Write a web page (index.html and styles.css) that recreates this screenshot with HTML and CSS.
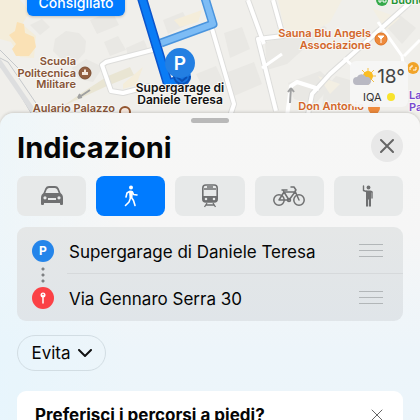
FILE: index.html
```html
<!DOCTYPE html>
<html lang="it">
<head>
<meta charset="UTF-8" />
<meta name="viewport" content="width=device-width, initial-scale=1" />
<title>Indicazioni</title>
<link rel="stylesheet" href="styles.css">
</head>
<body>

<section class="map">
  <svg class="map-canvas" viewBox="0 0 420 132" preserveAspectRatio="xMidYMin slice" role="img" aria-label="Mappa">
    <rect width="420" height="132" fill="#f0efeb" />

    <!-- blocks -->
    <g fill="#e9e8e4">
      <path d="M55 39l11-8 13 2 7 8-1 11-8 9-15-1-9-9z" />
      <path d="M30 25l12-6 8 8-10 8zM72 68l14-9 17 8-10 15-14-3zM126 48l18-8 5 12-20 8z" />
      <path d="M163 20l20-8 6 12-21 10zM224 33l18-6 8 22-20 9zM228 72l26-10 8 22-28 12zM196 74l20-8 7 15-19 9z" />
      <path d="M265 42l28-6 22-18 12 10-40 36-20 6zM288 83l32-12 14 12-20 22-20-6z" />
      <path d="M324 90l12-14 14 4v28h-28zM396 12l20 16-14 16-16-18z" />
      <path d="M90 20l22-9 7 14-22 9zM104 42l14-6 8 14-16 6z" />
    </g>
    <g fill="#f4edda">
      <path d="M0 0l20 0 10 12-8 12 14 12-2 22-14-1-9-15-11-3z" />
      <path d="M123 84l20-17-7 18-13 4zM174 20l28-10-4 12-18 5z" />
    </g>
    <g fill="#f3efe3">
      <path d="M278 0h64l-12 22-24 14-22-8zM372 8l28 10-14 12zM318 76l22 8-10 10z" />
    </g>
    <path d="M9 35l6-4 2-9 7 2 1 9 9 4 2 10-7 9-13 0-4-7 4-5z" fill="#fae1b5" />
    <path d="M83 92l25-16 22-9 4 8-27 11-26 12-18 8z" fill="#e9e5d3" />

    <!-- streets -->
    <g fill="none" stroke="#dddddb" stroke-width="6" stroke-linejoin="round">
      <path d="M160 48l-54 14-4 3 9 26 12 2 27-7" />
      <path d="M273 0l10 36-25 3 18 72M413 0L330 74l-18 20-5 26M210 22l24 82-4 12M248 0l16 44" />
    </g>
    <g fill="none" stroke="#ffffff" stroke-width="4" stroke-linejoin="round">
      <path d="M160 48l-54 14-4 3 9 26 12 2 27-7" />
      <path d="M273 0l10 36-25 3 18 72M413 0L330 74l-18 20-5 26M287 116l4-30 6-4 22 7M210 22l24 82-4 12M248 0l16 44" />
      <path d="M378 22l24 34 4 30M404 56l16-16M344 58l20 18M262 68l20-14" stroke-width="3" />
    </g>
    <path d="M0 58l8 4 34 50M0 61l31 52M0 50l20 20" fill="none" stroke="#c5c8cb" stroke-width="1" />
    <path d="M-2 60l38 55" fill="none" stroke="#dddedf" stroke-width="5" />
    <path d="M90 90L78 98m0 0l2-4m-2 4l4-1M290 103l1-15m0 0l-3 4m3-4l3 4" fill="none" stroke="#a0a1a1" stroke-width="2" />

    <!-- route -->
    <g fill="none" stroke-linejoin="round">
      <path d="M161 43l52-19-8-26" stroke="#4a94dd" stroke-width="9" />
      <path d="M161 43l52-19-8-26" stroke="#7dbcf5" stroke-width="6" />
      <path d="M142-2l26 86 12-4" stroke="#0b55cc" stroke-width="10" />
      <path d="M142-2l26 86 12-4" stroke="#0a7cf5" stroke-width="7" />
    </g>

    <!-- selected stop -->
    <circle cx="182" cy="77" r="9" fill="#1673df" />
    <path d="M174 76a8 8 0 0 0 16 0M177 77l5 4 5-4" fill="none" stroke="#0a50b5" stroke-width="2" />
    <circle cx="180" cy="63" r="15" fill="#237fe2" />
    <text class="pin-letter" x="180" y="70">P</text>

    <!-- places -->
    <g class="place stop-name">
      <text x="180" y="92">Supergarage di</text>
      <text x="180" y="104">Daniele Teresa</text>
    </g>
    <g class="place school">
      <text x="76" y="65">Scuola</text>
      <text x="76" y="77">Politecnica</text>
      <text x="76" y="88">Militare</text>
      <text x="115" y="112">Aulario Palazzo</text>
    </g>
    <circle cx="85" cy="73" r="6" fill="#926042" stroke="#7b4d31" />
    <path d="M82 75v-3h2v-2l1-1 1 1v2h2v3z" fill="#f3e7dc" />
    <circle cx="125" cy="112" r="5" fill="#f4e6dc" stroke="#92552f" stroke-width="2" />
    <g class="place food">
      <text x="371" y="37">Sauna Blu Angels</text>
      <text x="371" y="49">Associazione</text>
      <text x="364" y="110">Don Antonio</text>
    </g>
    <circle cx="381" cy="39" r="6" fill="#ee8a3c" stroke="#dd7424" />
    <path d="M378 36h6l-3 3zM381 39v4" fill="#fff" stroke="#fff" />
    <circle cx="374" cy="108" r="6" fill="#ee8a3c" />
    <circle cx="413" cy="68" r="6" fill="#f1a429" />
    <path d="M410 70v-3h2v-2M413 70h3v-3" fill="none" stroke="#fff" />
    <circle cx="382" cy="0" r="6" fill="#34a94a" />
    <path d="M379 0v2h2v-2M383 0v2h3v-2" fill="none" stroke="#fff" />
    <text class="place park" x="391" y="4">Buono</text>
    <g class="place shop">
      <text x="409" y="99">La</text>
      <text x="409" y="111">Pa</text>
    </g>
  </svg>

  <button class="route-tag">Consigliato</button>

  <div class="weather">
    <div class="weather-now">
      <svg width="23" height="18" viewBox="0 0 23 18" aria-hidden="true">
        <path d="M15 0v17M7 8h16M9 2l12 12M21 2L9 14" stroke="#f6c042" stroke-width="1" />
        <circle cx="15" cy="8" r="5" fill="#fbbd22" />
        <path d="M4 17a4 4 0 0 1 0-8 5 5 0 0 1 9 0 4 4 0 0 1 2 8z" fill="#b9b9c3" />
      </svg>
      <span>18°</span>
    </div>
    <div class="air">IQA <i class="air-dot"></i></div>
  </div>
</section>

<main class="sheet">
  <div class="grabber"></div>

  <header class="sheet-header">
    <h1>Indicazioni</h1>
    <button class="close-btn" aria-label="Chiudi">
      <svg width="14" height="14" viewBox="0 0 14 14"><path d="M1 1l12 12M13 1L1 13" /></svg>
    </button>
  </header>

  <nav class="modes">
    <button class="mode" aria-label="Auto">
      <svg width="24" height="20" viewBox="0 0 24 20">
        <path d="M4 8l2-5q1-2 3-2h6q2 0 3 2l2 5" fill="none" stroke="currentColor" stroke-width="1.800" />
        <path fill-rule="evenodd" d="M4 7h16q3 1 3 5v6q0 1-1 1h-1q-1 0-1-1v-1H4v1q0 1-1 1H2q-1 0-1-1v-6q0-4 3-5zM5 10.200a1.600 1.600 0 1 0 0 3.200 1.600 1.600 0 0 0 0-3.200zM19 10.200a1.600 1.600 0 1 0 0 3.200 1.600 1.600 0 0 0 0-3.200zM8 12v2h8v-2z" />
      </svg>
    </button>
    <button class="mode active" aria-label="A piedi">
      <svg width="14" height="22" viewBox="0 0 14 22">
        <circle cx="7" cy="2.500" r="2" />
        <path d="M5.500 6.500L3 8l-1 4M8.500 7l1 2.500 3.500.5M6.500 13L5 17l-3.500 3.500M7.500 12.500l2 3 1.500 5" fill="none" stroke="currentColor" stroke-width="1.600" stroke-linecap="round" stroke-linejoin="round" />
        <path d="M5 6q2-1 4 .5l-.5 6-3 .8z" />
      </svg>
    </button>
    <button class="mode" aria-label="Mezzi pubblici">
      <svg width="18" height="24" viewBox="0 0 18 24">
        <rect x="1.800" y="1" width="14.400" height="17" rx="3" fill="none" stroke="currentColor" stroke-width="1.600" />
        <path fill-rule="evenodd" d="M2 12h14v4q0 2-2 2H4q-2 0-2-2zM5 13.700a1.300 1.300 0 1 0 0 2.600 1.300 1.300 0 0 0 0-2.600zM13 13.700a1.300 1.300 0 1 0 0 2.600 1.300 1.300 0 0 0 0-2.600z" />
        <path d="M6 3h6M3 5h12M6 19l-2.500 4M12 19l2.500 4M5 21h8" fill="none" stroke="currentColor" stroke-width="1.300" />
      </svg>
    </button>
    <button class="mode" aria-label="Bicicletta">
      <svg width="32" height="22" viewBox="0 0 32 22">
        <g fill="none" stroke="currentColor" stroke-width="1.500" stroke-linecap="round" stroke-linejoin="round">
          <circle cx="6" cy="15" r="5.200" />
          <circle cx="26" cy="15" r="5.200" />
          <path d="M6 15l5-8h11l-6 8-5-8M9 5h5M11 7l-1-2M6 15h10M18 2h3l2 3-1 2M22 6l4 9" />
          <circle cx="16" cy="15" r="1.500" />
        </g>
      </svg>
    </button>
    <button class="mode" aria-label="Taxi">
      <svg width="12" height="22" viewBox="0 0 12 22">
        <circle cx="6.500" cy="2.500" r="1.900" />
        <path d="M1.500 1v4.500l3 1M10 7v6" fill="none" stroke="currentColor" stroke-width="1.400" stroke-linecap="round" stroke-linejoin="round" />
        <path d="M4 5.500h4.500q2 0 2 2H9v14H6.900v-7h-.8v7H4z" />
      </svg>
    </button>
  </nav>

  <ul class="stops">
    <li class="stop">
      <span class="stop-icon parking">P</span>
      <span class="stop-text">Supergarage di Daniele Teresa</span>
      <span class="handle"></span>
    </li>
    <li class="stop">
      <span class="stop-icon pin">
        <svg width="6" height="12" viewBox="0 0 6 12" aria-hidden="true">
          <circle cx="3" cy="3" r="2.500" fill="#fff" />
          <path d="M3 5v6" stroke="#fff" stroke-width="1.500" stroke-linecap="round" />
          <circle cx="3" cy="2.500" r=".8" fill="#fb4146" />
        </svg>
      </span>
      <span class="stop-text">Via Gennaro Serra 30</span>
      <span class="handle"></span>
    </li>
  </ul>

  <button class="avoid-btn">
    Evita
    <svg width="14" height="8" viewBox="0 0 14 8" aria-hidden="true"><path d="M1 1l6 6 6-6" /></svg>
  </button>

  <section class="tip">
    <h2>Preferisci i percorsi a piedi?</h2>
    <button class="tip-close" aria-label="Chiudi suggerimento">
      <svg width="12" height="12" viewBox="0 0 12 12"><path d="M1 1l10 10M11 1L1 11" /></svg>
    </button>
  </section>
</main>

</body>
</html>
```
FILE: styles.css
```css
:root {
  --blue: #007bff;
  --black: #060606;
  --gray: #6f7071;
}
* {
  box-sizing: border-box;
}
body {
  margin: 0;
  height: 100vh;
  overflow: hidden;
  font-family: Inter, "Liberation Sans", sans-serif;
  color: var(--black);
}
button {
  font-family: inherit;
  border: none;
  padding: 0;
  cursor: pointer;
}
h1, h2, ul {
  margin: 0;
  padding: 0;
}

/* Map */
.map {
  position: relative;
  height: 132px;
  overflow: hidden;
}
.map-canvas {
  display: block;
  width: 100%;
  height: 100%;
}
.place {
  font-size: 11px;
  font-weight: 600;
  stroke: #f8f7f4;
  stroke-width: 2px;
  paint-order: stroke;
}
.stop-name {
  font-size: 12px;
  text-anchor: middle;
  fill: #111;
}
.school {
  text-anchor: end;
  fill: #875437;
}
.food {
  text-anchor: end;
  fill: #d3662a;
}
.park {
  fill: #1f9336;
}
.shop {
  fill: #7848cf;
}
.pin-letter {
  font-size: 19px;
  font-weight: 600;
  text-anchor: middle;
  fill: #fff;
}
.route-tag {
  position: absolute;
  top: -12px;
  left: 27px;
  width: 98px;
  height: 28px;
  border-radius: 6px;
  background: var(--blue);
  color: #fff;
  font-size: 14px;
  font-weight: 500;
  box-shadow: 0 1px 3px rgba(0,0,0,0.2);
}
.weather {
  position: absolute;
  top: 61px;
  right: 12px;
  width: 58px;
  height: 46px;
  padding: 4px 3px;
  border-radius: 6px;
  background: rgba(246,246,245,0.95);
}
.weather-now {
  display: flex;
  align-items: center;
  justify-content: space-between;
  font-size: 19px;
  line-height: 24px;
  color: #444;
}
.air {
  display: flex;
  align-items: center;
  gap: 5px;
  padding-left: 10px;
  font-size: 11px;
  line-height: 16px;
  color: #333;
}
.air-dot {
  width: 8px;
  height: 8px;
  border-radius: 50%;
  background: #f8e32c;
}

/* Sheet */
.sheet {
  position: relative;
  min-height: calc(100vh - 113px);
  margin-top: -19px;
  padding: 5px 17px 0;
  border-radius: 14px 14px 0 0;
  background: linear-gradient(90deg, rgba(225,245,255,0.4), rgba(247,247,246,0) 30%),
    linear-gradient(#f7f7f6 0%, #f6f6f6 35%, #edf5fa 70%, #ebf5fb 100%);
  box-shadow: 0 -1px 3px rgba(0,0,0,0.15);
}
.grabber {
  width: 38px;
  height: 5px;
  margin: 0 auto 7px;
  border-radius: 3px;
  background: #b9b9b9;
}
.sheet-header {
  display: flex;
  justify-content: space-between;
  align-items: center;
}
h1 {
  padding-top: 4px;
  font-size: 29px;
  line-height: 28px;
  font-weight: 700;
}
.close-btn {
  display: flex;
  align-items: center;
  justify-content: center;
  width: 32px;
  height: 32px;
  border-radius: 50%;
  background: #e8e8e8;
}
.close-btn path, .tip-close path, .avoid-btn path {
  fill: none;
  stroke: #666;
  stroke-width: 2px;
  stroke-linecap: round;
}
.modes {
  display: grid;
  grid-template-columns: repeat(5, 1fr);
  gap: 10px;
  margin-top: 14px;
}
.mode {
  display: flex;
  align-items: center;
  justify-content: center;
  height: 40px;
  border-radius: 8px;
  background: #e7e9e9;
  color: var(--gray);
}
.mode svg {
  fill: currentColor;
}
.mode.active {
  background: var(--blue);
  color: #fff;
}

/* Stops */
.stops {
  margin-top: 11px;
  list-style: none;
  border-radius: 9px;
  background: linear-gradient(#e5e7e7, #e0e5e9);
}
.stop {
  position: relative;
  display: flex;
  align-items: center;
  height: 47px;
  padding: 0 20px 0 15px;
}
.stop-icon {
  display: flex;
  align-items: center;
  justify-content: center;
  width: 22px;
  height: 22px;
  margin-right: 15px;
  border-radius: 50%;
  color: #fff;
  font-size: 12px;
  font-weight: 700;
}
.parking {
  background: #2585ea;
}
.pin {
  background: #fb4146;
}
.stop-text {
  flex: 1;
  padding-top: 2px;
  font-size: 17px;
}
.handle {
  width: 24px;
  height: 13px;
  border: solid #b2b6b8;
  border-width: 1px 0;
  background: linear-gradient(#b2b6b8, #b2b6b8) center / 100% 1px no-repeat;
}
/* dots between the two stops */
.stop:first-child::before {
  content: "";
  position: absolute;
  left: 24px;
  top: 39px;
  width: 4px;
  height: 18px;
  background: radial-gradient(circle, #7d8082 1px, transparent 2px) 0 0 / 4px 6px;
}
.stop:first-child::after {
  content: "";
  position: absolute;
  left: 50px;
  right: 0;
  bottom: 0;
  height: 1px;
  background: #d6d9db;
}

.avoid-btn {
  display: flex;
  align-items: center;
  justify-content: center;
  gap: 7px;
  width: 89px;
  height: 36px;
  margin-top: 14px;
  border: 1px solid #d2dde3;
  border-radius: 18px;
  background: transparent;
  color: var(--black);
  font-size: 17px;
}
.avoid-btn path {
  stroke: #111;
}

/* Tip card */
.tip {
  display: flex;
  justify-content: space-between;
  align-items: flex-start;
  margin-top: 20px;
  padding: 12px 20px 24px 18px;
  border-radius: 9px;
  background: #fff;
}
h2 {
  font-size: 17px;
  line-height: 24px;
  font-weight: 700;
}
.tip-close {
  display: flex;
  align-items: center;
  height: 24px;
  background: transparent;
}
.tip-close path {
  stroke-width: 1px;
}
```
